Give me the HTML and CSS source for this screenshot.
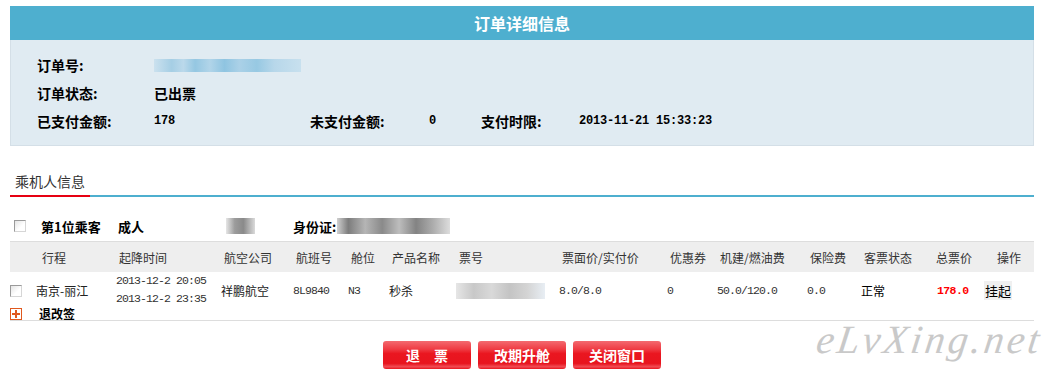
FILE: index.html
```html
<!DOCTYPE html>
<html lang="zh-CN">
<head>
    <meta charset="UTF-8">
    <title>订单详细信息</title>
    <link rel="stylesheet" href="styles.css">
</head>
<body>
    <div class="page">
        <div class="title-bar">订单详细信息</div>
        <div class="info-box">
            <div class="info-row">
                <span class="label">订单号:</span>
                <span class="blur blur-blue"></span>
            </div>
            <div class="info-row">
                <span class="label">订单状态:</span>
                <span class="value-cn">已出票</span>
            </div>
            <div class="info-row info-grid">
                <span class="label">已支付金额:</span>
                <span class="num">178</span>
                <span class="label">未支付金额:</span>
                <span class="num">0</span>
                <span class="label">支付时限:</span>
                <span class="num">2013-11-21 15:33:23</span>
            </div>
        </div>

        <div class="tab-head">
            <span class="tab-title">乘机人信息</span>
        </div>

        <div class="passenger">
            <span class="check check-big"></span>
            <span class="p-index">第1位乘客</span>
            <span class="p-type">成人</span>
            <span class="blur blur-name"></span>
            <span class="p-id">身份证:</span>
            <span class="blur blur-id"></span>
        </div>

        <div class="trip-table">
            <div class="grid thead">
                <span></span>
                <span class="h1">行程</span>
                <span>起降时间</span>
                <span>航空公司</span>
                <span>航班号</span>
                <span>舱位</span>
                <span>产品名称</span>
                <span>票号</span>
                <span>票面价/实付价</span>
                <span>优惠券</span>
                <span>机建/燃油费</span>
                <span>保险费</span>
                <span>客票状态</span>
                <span>总票价</span>
                <span class="h-op">操作</span>
            </div>
            <div class="grid trow">
                <span><span class="check"></span></span>
                <span>南京-丽江</span>
                <span class="mono times">2013-12-2 20:05<br>2013-12-2 23:35</span>
                <span>祥鹏航空</span>
                <span class="mono">8L9840</span>
                <span class="mono">N3</span>
                <span>秒杀</span>
                <span><span class="blur blur-ticket"></span></span>
                <span class="mono">8.0/8.0</span>
                <span class="mono">0</span>
                <span class="mono">50.0/120.0</span>
                <span class="mono">0.0</span>
                <span class="status">正常</span>
                <span class="mono total">178.0</span>
                <span><span class="op">挂起</span></span>
            </div>
            <div class="rule-row">
                <svg class="plus" width="12" height="12" viewBox="0 0 12 12">
                    <rect x="0.5" y="0.5" width="11" height="11" fill="#fff" stroke="#e0581e"/>
                    <rect x="2" y="5" width="8" height="2" fill="#e0581e"/>
                    <rect x="5" y="2" width="2" height="8" fill="#e0581e"/>
                </svg>
                <span class="rule-text">退改签</span>
            </div>
        </div>

        <div class="buttons">
            <button class="red-btn" type="button">退　票</button>
            <button class="red-btn" type="button">改期升舱</button>
            <button class="red-btn" type="button">关闭窗口</button>
        </div>

        <div class="watermark">eLvXing.net</div>
    </div>
</body>
</html>
```

FILE: styles.css
```css
body {
    margin: 0;
    background: #fff;
    color: #000;
    font-family: "Noto Sans CJK SC", "Liberation Sans", sans-serif;
    font-size: 12px;
}
.page {
    position: relative;
    width: 1024px;
    margin: 6px 0 0 10px;
    height: 367px;
}
.title-bar {
    background: #4eafcf;
    color: #fff;
    height: 34px;
    line-height: 34px;
    text-align: center;
    font-size: 16px;
    font-weight: bold;
}
.info-box {
    background: #e0ebf2;
    border: 1px solid #d4dfe7;
    border-top: none;
    padding: 11px 0 10px 26px;
}
.info-row {
    display: flex;
    align-items: center;
    height: 28px;
}
.info-row .label {
    width: 117px;
    font-size: 14px;
    font-weight: bold;
}
.info-grid {
    display: grid;
    grid-template-columns: 117px 156px 119px 52px 98px auto;
}
.info-grid .label {
    width: auto;
}
.value-cn {
    font-size: 14px;
    font-weight: bold;
}
.num {
    font-family: "Liberation Mono", monospace;
    font-size: 12px;
    font-weight: bold;
    letter-spacing: -0.2px;
}
.blur {
    display: inline-block;
}
.blur-blue {
    width: 147px;
    height: 13px;
    background: linear-gradient(90deg, #c9e0ee 0, #9fcbe3 12%, #b7d7ea 20%, #8cc3e0 28%, #acd2e8 38%, #86c0df 48%, #a5cee6 58%, #8fc5e1 70%, #b3d5e9 82%, #c5dfee 100%);
    opacity: 0.9;
}
/* tab: red underline sits on top of the blue rule */
.tab-head {
    margin-top: 21px;
    height: 28px;
    border-bottom: 2px solid #4eafcf;
}
.tab-title {
    display: inline-block;
    vertical-align: top;
    box-sizing: border-box;
    width: 80px;
    height: 30px;
    line-height: 28px;
    padding-left: 5px;
    font-size: 14px;
    color: #333;
    border-bottom: 2px solid #e60012;
}
.passenger {
    display: flex;
    align-items: center;
    height: 30px;
    margin-top: 14px;
    font-size: 13px;
    font-weight: bold;
}
.check {
    display: inline-block;
    width: 10px;
    height: 10px;
    border: 1px solid #9a9a9a;
    border-right-color: #d6d6d6;
    border-bottom-color: #d6d6d6;
    background: linear-gradient(135deg, #e4e4e4, #fff 60%);
}
.check-big {
    margin-left: 4px;
}
.p-index {
    margin-left: 15px;
    width: 77px;
}
.p-type {
    width: 108px;
}
.blur-name {
    width: 29px;
    height: 16px;
    background: linear-gradient(90deg, #e6e6e6, #9c9c9c 30%, #8a8a8a 60%, #dadada);
    margin-right: 38px;
}
.p-id {
    width: 44px;
}
.blur-id {
    width: 113px;
    height: 16px;
    background: linear-gradient(90deg, #d0d0d0 0, #7d7d7d 10%, #b5b5b5 25%, #8a8a8a 40%, #bdbdbd 55%, #838383 70%, #adadad 85%, #dddddd 100%);
}
.grid {
    display: grid;
    grid-template-columns: 26px 80px 105px 72px 55px 41px 67px 103px 108px 50px 90px 54px 72px 51px 50px;
    align-items: center;
}
.thead {
    height: 30px;
    border-top: 1px solid #dddddd;
    background: #eeeeee;
    color: #333;
}
.thead span {
    padding-left: 3px;
}
.thead .h1 {
    padding-left: 6px;
}
.thead .h-op {
    padding-left: 13px;
}
.trow {
    height: 35px;
    color: #222;
}
.trow .check {
    margin-top: 4px;
}
.mono {
    font-family: "Liberation Mono", monospace;
    font-size: 11.5px;
    letter-spacing: -0.9px;
    color: #333;
}
.times {
    line-height: 18px;
}
.blur-ticket {
    width: 89px;
    height: 16px;
    vertical-align: middle;
    background: linear-gradient(90deg, #e6e6e6, #c8c8c8 20%, #d9d9d9 40%, #c4c4c4 60%, #d4d4d4 80%, #e8eef4);
}
.status {
    color: #000;
}
.total {
    color: #ff0000;
    font-weight: bold;
    padding-left: 4px;
    letter-spacing: -0.6px;
}
.op {
    display: inline-block;
    background: #f0f0f0;
    padding: 0 1px;
    font-size: 13px;
    line-height: 19px;
    color: #000;
}
.rule-row {
    display: flex;
    align-items: center;
    height: 13px;
    border-bottom: 1px solid #dddddd;
}
.plus {
    display: block;
}
.rule-text {
    margin-left: 17px;
    font-size: 12px;
    font-weight: bold;
    line-height: 12px;
}
.buttons {
    display: flex;
    justify-content: center;
    gap: 7px;
    margin-top: 20px;
}
.red-btn {
    width: 88px;
    height: 28px;
    border: none;
    border-radius: 3px;
    padding: 0;
    color: #fff;
    font-family: "Noto Sans CJK SC", sans-serif;
    font-size: 14px;
    font-weight: bold;
    background: linear-gradient(#f36a70 0, #ef3a42 30%, #ea1620 45%, #e8141e 80%, #f04c54 92%, #e8141e 100%);
    cursor: pointer;
}
.watermark {
    position: absolute;
    right: -8px;
    top: 310px;
    font-family: "Liberation Serif", serif;
    font-style: italic;
    font-size: 40px;
    letter-spacing: 3px;
    color: #c9c9c9;
    transform: skewX(-8deg);
}
```
